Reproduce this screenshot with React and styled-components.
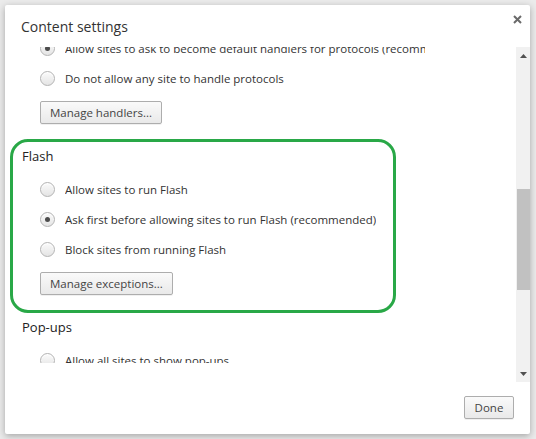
import React from 'react'
import styled, { createGlobalStyle } from 'styled-components'

const GlobalStyle = createGlobalStyle`
  html, body {
    margin: 0;
    padding: 0;
    background: #ebebeb;
  }
  body {
    font-family: "Open Sans", "Noto Sans", "Liberation Sans", sans-serif;
    font-size: 11.5px;
    color: #333;
  }
`

const Page = styled.div`
  width: 536px;
  height: 439px;
  padding: 5px 6px 5px 5px;
  box-sizing: border-box;
`

const Dialog = styled.div`
  width: 525px;
  height: 429px;
  background: #fff;
  border-radius: 2px;
  box-shadow: 0 2px 7px rgba(0, 0, 0, 0.3);
  display: flex;
  flex-direction: column;
  overflow: hidden;
`

const Header = styled.div`
  height: 42px;
  display: flex;
  justify-content: space-between;
  align-items: flex-start;
  padding-left: 16px;
  box-sizing: border-box;
  flex-shrink: 0;
`

const Title = styled.h1`
  margin: 0;
  padding-top: 12px;
  font-size: 14px;
  font-weight: normal;
  color: #333;
  line-height: 20px;
`

const Close = styled.button`
  border: 0;
  background: none;
  padding: 0;
  width: 24px;
  height: 24px;
  margin: 2px 1px 0 0;
  display: flex;
  align-items: center;
  justify-content: center;
  cursor: pointer;
`

const Body = styled.div`
  height: 335px;
  display: flex;
  flex-shrink: 0;
`

const Viewport = styled.div`
  flex: 1;
  height: 316px;
  overflow: hidden;
`

const Scroller = styled.div`
  margin-top: ${p => -p.$offset}px;
  padding-left: 17px;
`

const Section = styled.section`
  position: relative;
  margin-bottom: 22px;
`

const Heading = styled.h3`
  margin: 0 0 8px;
  font-size: 13px;
  font-weight: normal;
  line-height: 20px;
  color: #222;
`

const Options = styled.div`
  padding-left: 18px;
`

const Row = styled.label`
  height: 30px;
  display: flex;
  align-items: center;
  gap: 10px;
`

const Radio = styled.span`
  width: 13px;
  height: 13px;
  border-radius: 50%;
  border: 1px solid #b3b3b3;
  background: linear-gradient(#fbfbfb, #e4e4e4);
  box-shadow: inset 0 1px 1px #fff;
  display: flex;
  align-items: center;
  justify-content: center;
  flex-shrink: 0;

  &::after {
    content: '';
    width: 5px;
    height: 5px;
    border-radius: 50%;
    background: #4c4c4c;
    display: ${p => (p.$checked ? 'block' : 'none')};
  }
`

const Label = styled.span`
  white-space: nowrap;
  overflow: hidden;
  max-width: 360px;
`

const Button = styled.button`
  height: 23px;
  margin-top: 8px;
  padding: 0 9px;
  font-family: inherit;
  font-size: 11.5px;
  color: #444;
  border: 1px solid #adadad;
  border-radius: 2px;
  background: linear-gradient(#fafafa, #e9e9e9);
  box-shadow: 0 1px 0 rgba(0, 0, 0, 0.06);
`

const Highlight = styled.div`
  position: absolute;
  left: -12px;
  top: -7px;
  width: 386px;
  height: 174px;
  border: 3px solid #29a847;
  border-radius: 18px;
  box-sizing: border-box;
  pointer-events: none;
`

const Scrollbar = styled.div`
  width: 14px;
  background: #f1f1f1;
  display: flex;
  flex-direction: column;
  align-items: stretch;
`

const Arrow = styled.div`
  height: 17px;
  display: flex;
  align-items: center;
  justify-content: center;
`

const Track = styled.div`
  flex: 1;
  display: flex;
  flex-direction: column;
`

const Thumb = styled.div`
  background: #c1c1c1;
  margin-left: 1px;
`

const Footer = styled.div`
  flex: 1;
  display: flex;
  justify-content: flex-end;
  align-items: flex-start;
  padding: 14px 16px 0 0;
`

const DoneButton = styled(Button)`
  margin-top: 0;
  width: 50px;
  padding: 0;
`

// first section's heading is scrolled out of view, so it's left off
const sections = [
  {
    key: 'handlers',
    options: [
      'Allow sites to ask to become default handlers for protocols (recommended)',
      'Do not allow any site to handle protocols'
    ],
    checked: 0,
    action: 'Manage handlers...'
  },
  {
    key: 'flash',
    title: 'Flash',
    options: [
      'Allow sites to run Flash',
      'Ask first before allowing sites to run Flash (recommended)',
      'Block sites from running Flash'
    ],
    checked: 1,
    action: 'Manage exceptions...',
    highlight: true
  },
  {
    key: 'popups',
    title: 'Pop-ups',
    options: [
      'Allow all sites to show pop-ups',
      'Do not allow any site to show pop-ups (recommended)'
    ],
    checked: 1,
    action: 'Manage exceptions...'
  }
]

function Triangle ({ up }) {
  return (
    <svg width='7' height='4' viewBox='0 0 7 4'>
      <path d={up ? 'M0 4 L3.5 0 L7 4 Z' : 'M0 0 L3.5 4 L7 0 Z'} fill='#505050' />
    </svg>
  )
}

function App () {
  return (
    <Page>
      <GlobalStyle />
      <Dialog>
        <Header>
          <Title>Content settings</Title>
          <Close aria-label='Close'>
            <svg width='9' height='9' viewBox='0 0 9 9'>
              <path d='M1 1 L8 8 M8 1 L1 8' stroke='#6a6a6a' strokeWidth='2' />
            </svg>
          </Close>
        </Header>
        <Body>
          <Viewport>
            <Scroller $offset={14}>
              {sections.map(s => (
                <Section key={s.key}>
                  {s.highlight && <Highlight />}
                  {s.title && <Heading>{s.title}</Heading>}
                  <Options>
                    {s.options.map((o, i) => (
                      <Row key={o}>
                        <Radio $checked={i === s.checked} />
                        <Label>{o}</Label>
                      </Row>
                    ))}
                    <Button>{s.action}</Button>
                  </Options>
                </Section>
              ))}
            </Scroller>
          </Viewport>
          <Scrollbar>
            <Arrow><Triangle up /></Arrow>
            <Track>
              <div style={{ height: 125 }} />
              <Thumb style={{ height: 101 }} />
            </Track>
            <Arrow><Triangle /></Arrow>
          </Scrollbar>
        </Body>
        <Footer>
          <DoneButton>Done</DoneButton>
        </Footer>
      </Dialog>
    </Page>
  )
}

export default App
